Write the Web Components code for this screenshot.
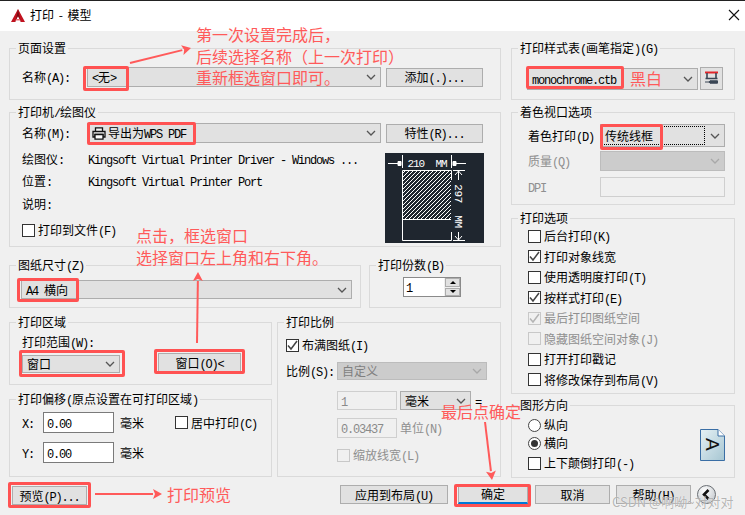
<!DOCTYPE html>
<html lang="zh">
<head>
<meta charset="utf-8">
<title>打印 - 模型</title>
<style>
  html, body { margin: 0; width: 745px; height: 515px; overflow: hidden; background: #f0f0f0; }
  body { font: 12px/16px "Noto Sans CJK SC", "Liberation Sans", sans-serif; color: #000; }
  .main { display: grid; grid-template-columns: 492px 224px; column-gap: 10px; padding: 9px 0 0 9px; }
  .col { display: flex; flex-direction: column; }
  .row { display: flex; align-items: center; }
  .top { align-items: flex-start; }
  .footer { display: flex; align-items: flex-start; padding: 7px 0 0 12px; }
</style>
</head>
<body>
<print-dialog caption="打印 - 模型">
  <div class="main">
    <div class="col">
      <print-group legend="页面设置" style="height:60px">
        <div class="row" style="padding:11px 0 0 12px">
          <print-text text="名称(A):" style="width:65px"></print-text>
          <print-select text="<无>" style="width:294px;height:20px"></print-select>
          <print-button text="添加(.)..." style="width:97px;height:19px;margin-left:5px"></print-button>
        </div>
      </print-group>

      <print-group legend="打印机/绘图仪" style="height:143px;margin-top:4px">
        <div class="row" style="padding:3px 0 0 12px">
          <print-text text="名称(M):" style="width:65px"></print-text>
          <print-select text="导出为WPS PDF" printer style="width:294px;height:20px"></print-select>
          <print-button text="特性(R)..." style="width:97px;height:19px;margin-left:5px"></print-button>
        </div>
        <div class="row top" style="padding-left:12px">
          <div class="col" style="width:363px;padding-top:5px">
            <div class="row" style="height:22px"><print-text text="绘图仪:" style="width:66px"></print-text><print-text text="Kingsoft Virtual Printer Driver - Windows ..."></print-text></div>
            <div class="row" style="height:22px"><print-text text="位置:" style="width:66px"></print-text><print-text text="Kingsoft Virtual Printer Port"></print-text></div>
            <div class="row" style="height:23px"><print-text text="说明:"></print-text></div>
            <print-check text="打印到文件(F)" style="margin-top:7px"></print-check>
          </div>
          <print-preview style="margin-top:10px"></print-preview>
        </div>
      </print-group>

      <div class="row top" style="margin-top:10px;column-gap:8px">
        <print-group legend="图纸尺寸(Z)" style="width:352px;height:51px">
          <div class="row" style="padding:7px 0 0 11px">
            <print-select text="A4 横向" style="width:331px;height:19px"></print-select>
          </div>
        </print-group>
        <print-group legend="打印份数(B)" style="width:132px;height:51px">
          <div class="row" style="padding:4px 0 0 33px">
            <print-spin value="1"></print-spin>
          </div>
        </print-group>
      </div>

      <div class="row top" style="margin-top:6px;column-gap:5px">
        <div class="col" style="width:263px">
          <print-group legend="打印区域" style="height:71px">
            <div style="padding:4px 0 0 12px">
              <print-text text="打印范围(W):"></print-text>
              <div class="row top" style="margin-top:3px">
                <print-select text="窗口" style="width:98px;height:18px;margin-top:2px"></print-select>
                <print-button text="窗口(O)<" style="width:83px;height:19px;margin-left:38px"></print-button>
              </div>
            </div>
          </print-group>
          <print-group legend="打印偏移(原点设置在可打印区域)" style="height:86px;margin-top:6px">
            <div style="padding:5px 0 0 12px">
              <div class="row">
                <print-text text="X:" style="width:21px"></print-text>
                <print-input value="0.00" style="width:71px;height:21px"></print-input>
                <print-text text="毫米" style="margin-left:6px;width:24px"></print-text>
                <print-check text="居中打印(C)" style="margin-left:31px"></print-check>
              </div>
              <div class="row" style="margin-top:9px">
                <print-text text="Y:" style="width:21px"></print-text>
                <print-input value="0.00" style="width:71px;height:21px"></print-input>
                <print-text text="毫米" style="margin-left:6px"></print-text>
              </div>
            </div>
          </print-group>
        </div>
        <print-group legend="打印比例" style="width:224px;height:163px">
          <div style="padding:7px 0 0 8px">
            <print-check text="布满图纸(I)" checked></print-check>
            <div class="row" style="margin-top:9px">
              <print-text text="比例(S):" style="width:51px"></print-text>
              <print-select text="自定义" disabled style="width:150px;height:18px"></print-select>
            </div>
            <div class="row" style="margin:11px 0 0 51px">
              <print-input value="1" disabled style="width:60px;height:19px"></print-input>
              <print-select text="毫米" style="width:71px;height:19px;margin-left:3px"></print-select>
              <print-text text="=" style="margin-left:4px"></print-text>
            </div>
            <div class="row" style="margin:8px 0 0 51px">
              <print-input value="0.03437" disabled style="width:60px;height:20px"></print-input>
              <print-text text="单位(N)" disabled style="margin-left:3px"></print-text>
            </div>
            <print-check text="缩放线宽(L)" disabled style="margin:9px 0 0 51px"></print-check>
          </div>
        </print-group>
      </div>
    </div>

    <div class="col">
      <print-group legend="打印样式表(画笔指定)(G)" style="height:60px">
        <div class="row" style="padding:11px 0 0 15px">
          <print-select text="monochrome.ctb" style="width:171px;height:22px"></print-select>
          <print-iconbtn style="margin-left:2px">
            <svg width="15" height="15" viewBox="0 0 15 15">
              <path d="M1 1.500h13" stroke="#e0262b" stroke-width="2"/>
              <path d="M3 2v5M12 2v5M1.500 7.500h12" stroke="#3a4654" stroke-width="1.600" fill="none"/>
              <path d="M1 11h4l1-1.200h7.500v2.400H6l-1-1.200" fill="#3a4654" stroke="#3a4654"/>
            </svg>
          </print-iconbtn>
        </div>
      </print-group>

      <print-group legend="着色视口选项" style="height:101px;margin-top:4px">
        <div style="padding:4px 0 0 16px">
          <div class="row">
            <print-text text="着色打印(D)" style="width:72px"></print-text>
            <print-select text="传统线框" focus style="width:125px;height:23px"></print-select>
          </div>
          <div class="row" style="margin-top:4px">
            <print-text text="质量(Q)" disabled style="width:72px"></print-text>
            <print-select text="" disabled style="width:125px;height:20px"></print-select>
          </div>
          <div class="row" style="margin-top:6px">
            <print-text text="DPI" disabled style="width:72px"></print-text>
            <print-input value="" disabled style="width:125px;height:20px"></print-input>
          </div>
        </div>
      </print-group>

      <print-group legend="打印选项" style="height:184px;margin-top:5px">
        <div class="col" style="padding:2px 0 0 16px;row-gap:4.550px">
          <print-check text="后台打印(K)"></print-check>
          <print-check text="打印对象线宽" checked></print-check>
          <print-check text="使用透明度打印(T)"></print-check>
          <print-check text="按样式打印(E)" checked></print-check>
          <print-check text="最后打印图纸空间" checked disabled></print-check>
          <print-check text="隐藏图纸空间对象(J)" disabled></print-check>
          <print-check text="打开打印戳记"></print-check>
          <print-check text="将修改保存到布局(V)"></print-check>
        </div>
      </print-group>

      <print-group legend="图形方向" style="height:81px;margin-top:3px">
        <div class="row top">
          <div class="col" style="padding:4px 0 0 16px;row-gap:2px">
            <print-radio text="纵向"></print-radio>
            <print-radio text="横向" checked></print-radio>
            <print-check text="上下颠倒打印(-)" style="margin-top:2px"></print-check>
          </div>
          <svg width="25" height="32" viewBox="0 0 25 32" style="margin:16px 9px 0 auto">
            <defs><linearGradient id="pg" x1="0" y1="0" x2="1" y2="1"><stop offset="0" stop-color="#e6f1f5"/><stop offset="1" stop-color="#a6c6d2"/></linearGradient></defs>
            <path d="M.5.500H18L24.500 7V31.500H.5Z" fill="url(#pg)" stroke="#3a6ea5"/>
            <path d="M18 .5V7h6.500" fill="#fff" stroke="#3a6ea5"/>
            <text x="0" y="0" transform="translate(6 16) rotate(90) translate(-7 0)" font-family="Liberation Sans, sans-serif" font-size="19" fill="#111">A</text>
          </svg>
        </div>
      </print-group>
    </div>
  </div>

  <div class="footer">
    <print-button text="预览(P)..." style="width:75px;height:19px;margin-top:1px"></print-button>
    <print-button text="应用到布局(U)" style="width:108px;height:19px;margin-left:253px"></print-button>
    <print-button text="确定" default style="width:70px;height:19px;margin-left:10px"></print-button>
    <print-button text="取消" style="width:75px;height:19px;margin-left:7px"></print-button>
    <print-button text="帮助(H)" style="width:75px;height:19px;margin-left:6px"></print-button>
    <print-round style="margin-left:6px"></print-round>
  </div>

  <print-mark slot="overlay" box="83,66,46,25"></print-mark>
  <print-mark slot="overlay" box="87,122,109,23"></print-mark>
  <print-mark slot="overlay" box="526,66,98,23"></print-mark>
  <print-mark slot="overlay" box="600,124,63,26"></print-mark>
  <print-mark slot="overlay" box="17,278,62,24"></print-mark>
  <print-mark slot="overlay" box="19,350,106,27"></print-mark>
  <print-mark slot="overlay" box="154,349,91,25"></print-mark>
  <print-mark slot="overlay" box="8,482,83,26"></print-mark>
  <print-mark slot="overlay" box="454,484,77,23"></print-mark>

  <print-arrows slot="overlay"></print-arrows>

  <print-note slot="overlay" x="196" y="24">第一次设置完成后，<br>后续选择名称（上一次打印）<br>重新框选窗口即可。</print-note>
  <print-note slot="overlay" x="136" y="225">点击，框选窗口<br>选择窗口左上角和右下角。</print-note>
  <print-note slot="overlay" x="630" y="68">黑白</print-note>
  <print-note slot="overlay" x="167" y="484">打印预览</print-note>
  <print-note slot="overlay" x="441" y="401">最后点确定</print-note>
  <print-note slot="overlay" x="612" y="491" mark>CSDN @啊呦~对对对</print-note>
</print-dialog>

<script>
const CJK = '"Noto Sans CJK SC", "Liberation Sans", sans-serif';
const SHARED = `
  :host, * { box-sizing: border-box; }
  .a { font: 12px/1 "Liberation Mono", monospace; letter-spacing: -1.200px; white-space: pre; }
`;
const esc = s => s.replace(/&/g, "&amp;").replace(/</g, "&lt;").replace(/>/g, "&gt;");
// latin runs get a narrow mono, the dialog font has half-width latin
const lat = s => s.split(/([\x20-\x7e]+)/).map((p, i) => i % 2 ? `<span class="a">${esc(p)}</span>` : p).join("");

const CHEVRON = c => `<svg width="10" height="6" viewBox="0 0 10 6"><path d="M1 1l4 4 4-4" fill="none" stroke="${c}" stroke-width="1.300"/></svg>`;
const TICK = c => `<svg width="11" height="11" viewBox="0 0 11 11" style="display:block"><path d="M1 5.500l3 3.500 6-8" fill="none" stroke="${c}" stroke-width="1.500"/></svg>`;

class Part extends HTMLElement {
  connectedCallback() {
    if (this.shadowRoot) return;
    this.attachShadow({ mode: "open" }).innerHTML = `<style>${SHARED}${this.styles()}</style>${this.markup()}`;
  }
  styles() { return ""; }
  attr(n) { return esc(this.getAttribute(n) || ""); }
  label() { return lat(this.getAttribute("text") || ""); }
  is(n) { return this.hasAttribute(n); }
}

customElements.define("print-dialog", class extends Part {
  styles() { return `
    :host { display: block; position: relative; width: 745px; height: 515px; background: #f0f0f0; overflow: hidden; }
    .bar { height: 31px; background: #fff; border-top: 1px solid #222; display: flex; align-items: center; padding: 0 5px 2px 11px; }
    .cap { margin-left: 5px; font: 12px/16px ${CJK}; flex: 1; word-spacing: 2px; }
  `; }
  markup() { return `
    <div class="bar">
      <svg width="14" height="13" viewBox="0 0 14 13">
        <path d="M7 0L14 13H10L7 7 4 13H0Z" fill="#c1121f"/>
        <path d="M7 0L4.500 13H4L7 7 10 13H9.500Z" fill="#7d0b14"/>
        <path d="M5 10h4v1.500H5Z" fill="#e9686e"/>
      </svg>
      <span class="cap">${this.attr("caption")}</span>
      <svg width="12" height="12" viewBox="0 0 12 12"><path d="M1 1l10 10M11 1L1 11" stroke="#111" stroke-width="1.100"/></svg>
    </div>
    <slot></slot>
    <slot name="overlay"></slot>`; }
});

customElements.define("print-group", class extends Part {
  styles() { return `
    :host { display: block; }
    fieldset { margin: 0; padding: 0; height: 100%; min-width: 0; border: 1px solid #dadada; }
    legend { margin-left: 6px; padding: 0 2px; height: 16px; font: 12px/16px ${CJK}; white-space: nowrap; }
  `; }
  markup() { return `<fieldset><legend>${lat(this.getAttribute("legend"))}</legend><slot></slot></fieldset>`; }
});

customElements.define("print-text", class extends Part {
  styles() { return `
    :host { display: inline-block; height: 16px; white-space: nowrap; line-height: 16px; flex: none; }
    :host([disabled]) { color: #8f8f8f; }
  `; }
  markup() { return this.label(); }
});

customElements.define("print-select", class extends Part {
  styles() { return `
    :host { display: inline-flex; flex: none; align-items: stretch; background: #e1e1e1; border: 1px solid #adadad; line-height: 16px; white-space: nowrap; }
    :host([disabled]) { background: #cccccc; border-color: #bcbcbc; color: #7f7f7f; }
    .val { flex: 1; display: flex; align-items: center; column-gap: 2px; padding-left: 4px; min-width: 0; overflow: hidden; }
    :host([focus]) .val { border: 1px dotted #000; margin: 1px 0 1px 1px; padding-left: 2px; }
    .arr { width: 19px; flex: none; display: flex; align-items: center; justify-content: center; }
  `; }
  markup() {
    const printer = this.is("printer") ? `<svg width="14" height="13" viewBox="0 0 14 13"><path d="M3.500 4V.8h7V4M1 4.500h12V10H11V7.500H3V10H1Z" fill="#f4f4f4" stroke="#111" stroke-width="1.300"/><path d="M3 7.500h8v4.700H3Z" fill="#fff" stroke="#111" stroke-width="1.300"/></svg>` : "";
    return `<div class="val">${printer}<span>${this.label()}</span></div><div class="arr">${CHEVRON(this.is("disabled") ? "#a8a8a8" : "#555")}</div>`;
  }
});

customElements.define("print-button", class extends Part {
  styles() { return `
    :host { display: inline-flex; flex: none; align-items: center; justify-content: center; background: #e1e1e1; border: 1px solid #adadad; line-height: 16px; white-space: nowrap; }
    :host([default]) { border-bottom: 2px solid #0078d7; }
  `; }
  markup() { return `<span>${this.label()}</span>`; }
});

customElements.define("print-input", class extends Part {
  styles() { return `
    :host { display: inline-flex; flex: none; align-items: center; padding-left: 3px; background: #fff; border: 1px solid #7a7a7a; line-height: 16px; }
    :host([disabled]) { background: #f0f0f0; border: 1px solid #cfcfcf; color: #8a8a8a; }
  `; }
  markup() { return `<span>${lat(this.getAttribute("value") || "")}</span>`; }
});

customElements.define("print-spin", class extends Part {
  styles() { return `
    :host { display: inline-flex; flex: none; width: 58px; height: 20px; border: 1px solid #8a8a8a; background: #fff; line-height: 16px; }
    .v { flex: 1; padding: 1px 0 0 2px; }
    .s { width: 16px; flex: none; display: flex; flex-direction: column; background: #f0f0f0; row-gap: 1px; padding: 0 0 0 1px; }
    .b { flex: 1; background: #e1e1e1; border: 1px solid #adadad; display: flex; align-items: center; justify-content: center; }
    i { width: 0; height: 0; border: 3px solid transparent; }
    .u { border-bottom: 3px solid #000; border-top: 0; }
    .d { border-top: 3px solid #000; border-bottom: 0; }
  `; }
  markup() { return `<div class="v">${lat(this.getAttribute("value"))}</div><div class="s"><div class="b"><i class="u"></i></div><div class="b"><i class="d"></i></div></div>`; }
});

customElements.define("print-check", class extends Part {
  styles() { return `
    :host { display: flex; align-items: center; column-gap: 3px; height: 16px; white-space: nowrap; line-height: 16px; flex: none; }
    .box { width: 13px; height: 13px; flex: none; background: #fff; border: 1px solid #333; }
    :host([disabled]) { color: #8f8f8f; }
    :host([disabled]) .box { background: #f0f0f0; border-color: #c8c8c8; }
  `; }
  markup() {
    const tick = this.is("checked") ? TICK(this.is("disabled") ? "#b4b4b4" : "#444") : "";
    return `<div class="box">${tick}</div><span>${this.label()}</span>`;
  }
});

customElements.define("print-radio", class extends Part {
  styles() { return `
    :host { display: flex; align-items: center; column-gap: 3px; height: 16px; white-space: nowrap; line-height: 16px; }
    .o { width: 13px; height: 13px; flex: none; border-radius: 50%; background: #fff; border: 1px solid #444; display: flex; align-items: center; justify-content: center; }
    .o i { width: 7px; height: 7px; border-radius: 50%; background: #333; }
  `; }
  markup() { return `<div class="o">${this.is("checked") ? "<i></i>" : ""}</div><span>${this.label()}</span>`; }
});

customElements.define("print-iconbtn", class extends Part {
  styles() { return `
    :host { display: inline-flex; flex: none; width: 23px; height: 23px; align-items: center; justify-content: center; background: #e1e1e1; border: 1px solid #adadad; }
  `; }
  markup() { return `<slot></slot>`; }
});

customElements.define("print-round", class extends Part {
  styles() { return `:host { display: inline-block; flex: none; width: 19px; height: 19px; } svg { display: block; }`; }
  markup() { return `<svg width="19" height="19" viewBox="0 0 19 19">
    <defs><radialGradient id="r" cx=".4" cy=".3" r=".8"><stop offset="0" stop-color="#fff"/><stop offset="1" stop-color="#bfc4c9"/></radialGradient></defs>
    <circle cx="9.500" cy="9.500" r="9" fill="url(#r)" stroke="#6b6f74"/>
    <path d="M11.500 5L7 9.500l4.500 4.500" fill="none" stroke="#111" stroke-width="2.600"/></svg>`; }
});

customElements.define("print-preview", class extends Part {
  styles() { return `:host { display: block; flex: none; width: 99px; height: 90px; background: #1f262f; } svg { display: block; }`; }
  markup() {
    let hatch = "";
    for (let x = -45; x < 66; x += 4) hatch += `M${x + 17} 66L${x + 17 + 49} 17`;
    return `<svg width="99" height="90" viewBox="0 0 99 90" fill="none" stroke="#fff">
    <defs><clipPath id="c"><rect x="17" y="17" width="49" height="49"/></clipPath></defs>
    <path d="${hatch}" clip-path="url(#c)" shape-rendering="crispEdges"/>
    <path d="M17.500 17.500h49v70h-49ZM17.500 66.500h49"/>
    <path d="M3 10.500h10M17.500 2v13M66.500 2v13M68 10.500h13M73.500 17v71M68 17.500h12M68 87.500h12"/>
    <path d="M13 8.500h3v4h-3ZM68 8.500h3v4h-3Z" fill="#fff"/>
    <path d="M70 22l3.500-4 3.500 4M70 83l3.500 4 3.500-4"/>
    <text x="42" y="14" text-anchor="middle" font-family="Liberation Mono, monospace" font-size="11" letter-spacing="-1" fill="#fff" stroke="none" xml:space="preserve">210  MM</text>
    <rect x="66" y="27" width="15" height="52" fill="#1f262f" stroke="none"/>
    <text transform="translate(70 53) rotate(90)" text-anchor="middle" y="0" font-family="Liberation Mono, monospace" font-size="11" letter-spacing="-.4" fill="#fff" stroke="none" xml:space="preserve">297  MM</text>
  </svg>`; }
});

customElements.define("print-mark", class extends Part {
  styles() {
    const [x, y, w, h] = this.getAttribute("box").split(",");
    return `:host { position: absolute; left: ${x}px; top: ${y}px; width: ${w}px; height: ${h}px; border: 3px solid #ff5252; border-radius: 2px; }`;
  }
  markup() { return ""; }
});

customElements.define("print-arrows", class extends Part {
  styles() { return `:host { position: absolute; left: 0; top: 0; pointer-events: none; } svg { display: block; }`; }
  markup() {
    const arrow = (x1, y1, x2, y2) => {
      const a = Math.atan2(y2 - y1, x2 - x1), s = 9, w = 5;
      const bx = x2 - Math.cos(a) * s, by = y2 - Math.sin(a) * s;
      const nx = -Math.sin(a) * w, ny = Math.cos(a) * w;
      return `<path d="M${x1} ${y1}L${bx} ${by}" stroke="#ff5a5a" stroke-width="2"/>
        <path d="M${x2} ${y2}L${bx + nx} ${by + ny}L${bx + Math.cos(a) * 2} ${by + Math.sin(a) * 2}L${bx - nx} ${by - ny}Z" fill="#ff5a5a"/>`;
    };
    return `<svg width="745" height="515" viewBox="0 0 745 515">
      ${arrow(130, 63, 191, 48)}
      ${arrow(197, 343, 198, 272)}
      ${arrow(95, 494, 162, 494)}
      ${arrow(485, 422, 492, 480)}
    </svg>`;
  }
});

customElements.define("print-note", class extends Part {
  styles() { return `
    :host { position: absolute; left: ${this.getAttribute("x")}px; top: ${this.getAttribute("y")}px; font: 16px/21.500px ${CJK}; color: #ff5a5a; white-space: nowrap; }
    :host([mark]) { font-size: 13px; color: rgba(120,120,120,.55); text-shadow: 0 0 1px #fff; }
  `; }
  markup() { return `<slot></slot>`; }
});
</script>
</body>
</html>
